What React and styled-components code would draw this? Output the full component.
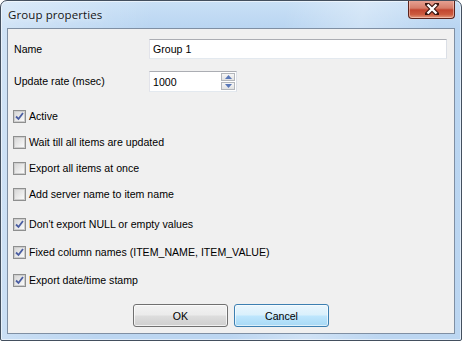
import React, { useState } from 'react';
import styled, { createGlobalStyle } from 'styled-components';

const GlobalStyle = createGlobalStyle`
  html, body {
    margin: 0;
    padding: 0;
    background: #ffffff;
  }
`;

const Window = styled.div`
  box-sizing: border-box;
  width: 462px;
  height: 341px;
  display: flex;
  flex-direction: column;
  border: 1px solid #434f5e;
  border-radius: 7px 7px 2px 2px;
  background:
    linear-gradient(100deg, rgba(255,255,255,0.35) 0%, rgba(255,255,255,0) 30%, rgba(255,255,255,0) 55%, rgba(255,255,255,0.3) 70%, rgba(255,255,255,0) 85%),
    linear-gradient(180deg, #c9e0f6 0px, #b9d5f1 28px, #bcd6f1 100%);
  box-shadow: inset 0 0 0 1px rgba(255, 255, 255, 0.55);
  overflow: hidden;
`;

const TitleBar = styled.div`
  height: 27px;
  display: flex;
  align-items: flex-start;
  justify-content: space-between;
  padding-left: 7px;
`;

const Title = styled.div`
  margin-top: 6px;
  font-family: 'Open Sans', 'Noto Sans', sans-serif;
  font-size: 11.5px;
  color: #141414;
  text-shadow: 0 0 6px rgba(255, 255, 255, 0.9);
  letter-spacing: 0.1px;
`;

const CloseButton = styled.div`
  box-sizing: border-box;
  width: 47px;
  height: 19px;
  margin-top: -1px;
  margin-right: 6px;
  display: flex;
  align-items: center;
  justify-content: center;
  border: 1px solid #5b231c;
  border-top: none;
  border-radius: 0 0 4px 4px;
  background: linear-gradient(180deg, #e8a597 0%, #d67d6a 45%, #c24630 55%, #cc5a3e 80%, #e39a7e 100%);
  box-shadow: inset 0 0 0 1px rgba(255, 220, 210, 0.5);
`;

const Client = styled.div`
  flex: 1;
  margin: 0 6px 6px;
  border: 1px solid #7f8fa3;
  background: #f0f0f0;
  display: flex;
  flex-direction: column;
  padding: 10px 7px 0 6px;
  font-family: 'Liberation Sans', Arial, sans-serif;
  font-size: 10.6px;
  color: #000;
`;

const FieldRow = styled.div`
  display: grid;
  grid-template-columns: 135px 1fr;
  align-items: center;
  margin-top: ${(p) => p.$top || 0}px;
`;

const Label = styled.span`
  line-height: 13px;
`;

const TextBox = styled.div`
  box-sizing: border-box;
  position: relative;
  width: ${(p) => (p.$width ? `${p.$width}px` : '100%')};
  height: ${(p) => p.$height}px;
  display: flex;
  align-items: center;
  padding-left: 3px;
  background: #fff;
  border: 1px solid #e3e9ef;
  border-top-color: #abadb3;
  border-left-color: #e2e3ea;
  border-right-color: #dbdfe6;
`;

const SpinBox = styled.div`
  position: absolute;
  top: 1px;
  right: 1px;
  bottom: 1px;
  width: 14px;
  display: flex;
  flex-direction: column;
  gap: 1px;
`;

const SpinHalf = styled.div`
  flex: 1;
  box-sizing: border-box;
  border: 1px solid #b3b6bb;
  background: linear-gradient(180deg, #f6f6f6, #e2e2e2);
  display: flex;
  align-items: center;
  justify-content: center;
`;

const Options = styled.div`
  display: flex;
  flex-direction: column;
  margin-top: 18px;
`;

const CheckRow = styled.label`
  display: flex;
  align-items: center;
  gap: 3px;
  height: 13px;
  margin-left: -1px;
  margin-top: ${(p) => p.$top || 0}px;
  line-height: 13px;
`;

const Box = styled.span`
  box-sizing: border-box;
  width: 13px;
  height: 13px;
  border: 1px solid #8e8f8f;
  background: #fff;
  display: flex;
  align-items: center;
  justify-content: center;
`;

const BoxInner = styled.span`
  box-sizing: border-box;
  width: 11px;
  height: 11px;
  border: 1px solid #cdcdcd;
  background: linear-gradient(135deg, #d8d8d8 0%, #ececec 60%, #fafafa 100%);
  display: flex;
  align-items: center;
  justify-content: center;
`;

const Buttons = styled.div`
  display: flex;
  justify-content: center;
  gap: 6px;
  margin-top: 17px;
  padding-left: 1px;
`;

const Button = styled.button`
  box-sizing: border-box;
  width: 95px;
  height: 23px;
  padding: 0;
  font-family: 'Liberation Sans', Arial, sans-serif;
  font-size: 10.6px;
  color: #000;
  border-radius: 3px;
  border: 1px solid ${(p) => (p.$default ? '#3c7fb1' : '#707070')};
  background: ${(p) =>
    p.$default
      ? 'linear-gradient(180deg, #eaf6fd 0%, #d9f0fc 48%, #bee6fd 52%, #a7d9f5 100%)'
      : 'linear-gradient(180deg, #f2f2f2 0%, #ebebeb 48%, #dddddd 52%, #cfcfcf 100%)'};
  box-shadow: inset 0 0 0 1px ${(p) => (p.$default ? 'rgba(255,255,255,0.6)' : 'rgba(255,255,255,0.7)')};
`;

const options = [
  { label: 'Active', checked: true, top: 0 },
  { label: 'Wait till all items are updated', checked: false, top: 13 },
  { label: 'Export all items at once', checked: false, top: 13 },
  { label: 'Add server name to item name', checked: false, top: 13 },
  { label: "Don't export NULL or empty values", checked: true, top: 17 },
  { label: 'Fixed column names (ITEM_NAME, ITEM_VALUE)', checked: true, top: 15 },
  { label: 'Export date/time stamp', checked: true, top: 15 },
];

function CheckMark() {
  return (
    <svg width="9" height="9" viewBox="0 0 9 9">
      <path d="M1 4.5 L3.5 7 L8 1" fill="none" stroke="#4b5ea2" strokeWidth="1.8" />
    </svg>
  );
}

function CheckBox({ label, checked, top }) {
  const [on, setOn] = useState(checked);
  return (
    <CheckRow $top={top} onClick={() => setOn(!on)}>
      <Box>
        <BoxInner>{on && <CheckMark />}</BoxInner>
      </Box>
      {label}
    </CheckRow>
  );
}

function Arrow({ up }) {
  return (
    <svg width="7" height="4" viewBox="0 0 7 4">
      <path d={up ? 'M0 4 L3.5 0 L7 4 Z' : 'M0 0 L3.5 4 L7 0 Z'} fill="#5a78b8" />
    </svg>
  );
}

export default function App() {
  return (
    <>
      <GlobalStyle />
      <Window>
        <TitleBar>
          <Title>Group properties</Title>
          <CloseButton>
            <svg width="14" height="12" viewBox="0 0 14 12">
              <path d="M2 1 L12 11 M12 1 L2 11" stroke="#3a1510" strokeWidth="4.5" strokeLinecap="round" />
              <path d="M2.5 1.5 L11.5 10.5 M11.5 1.5 L2.5 10.5" stroke="#ffffff" strokeWidth="2.4" />
            </svg>
          </CloseButton>
        </TitleBar>
        <Client>
          <FieldRow>
            <Label>Name</Label>
            <TextBox $height={20}>Group 1</TextBox>
          </FieldRow>
          <FieldRow $top={12}>
            <Label>Update rate (msec)</Label>
            <TextBox $height={21} $width={88}>
              1000
              <SpinBox>
                <SpinHalf>
                  <Arrow up />
                </SpinHalf>
                <SpinHalf>
                  <Arrow />
                </SpinHalf>
              </SpinBox>
            </TextBox>
          </FieldRow>
          <Options>
            {options.map((o) => (
              <CheckBox key={o.label} {...o} />
            ))}
          </Options>
          <Buttons>
            <Button>OK</Button>
            <Button $default>Cancel</Button>
          </Buttons>
        </Client>
      </Window>
    </>
  );
}
